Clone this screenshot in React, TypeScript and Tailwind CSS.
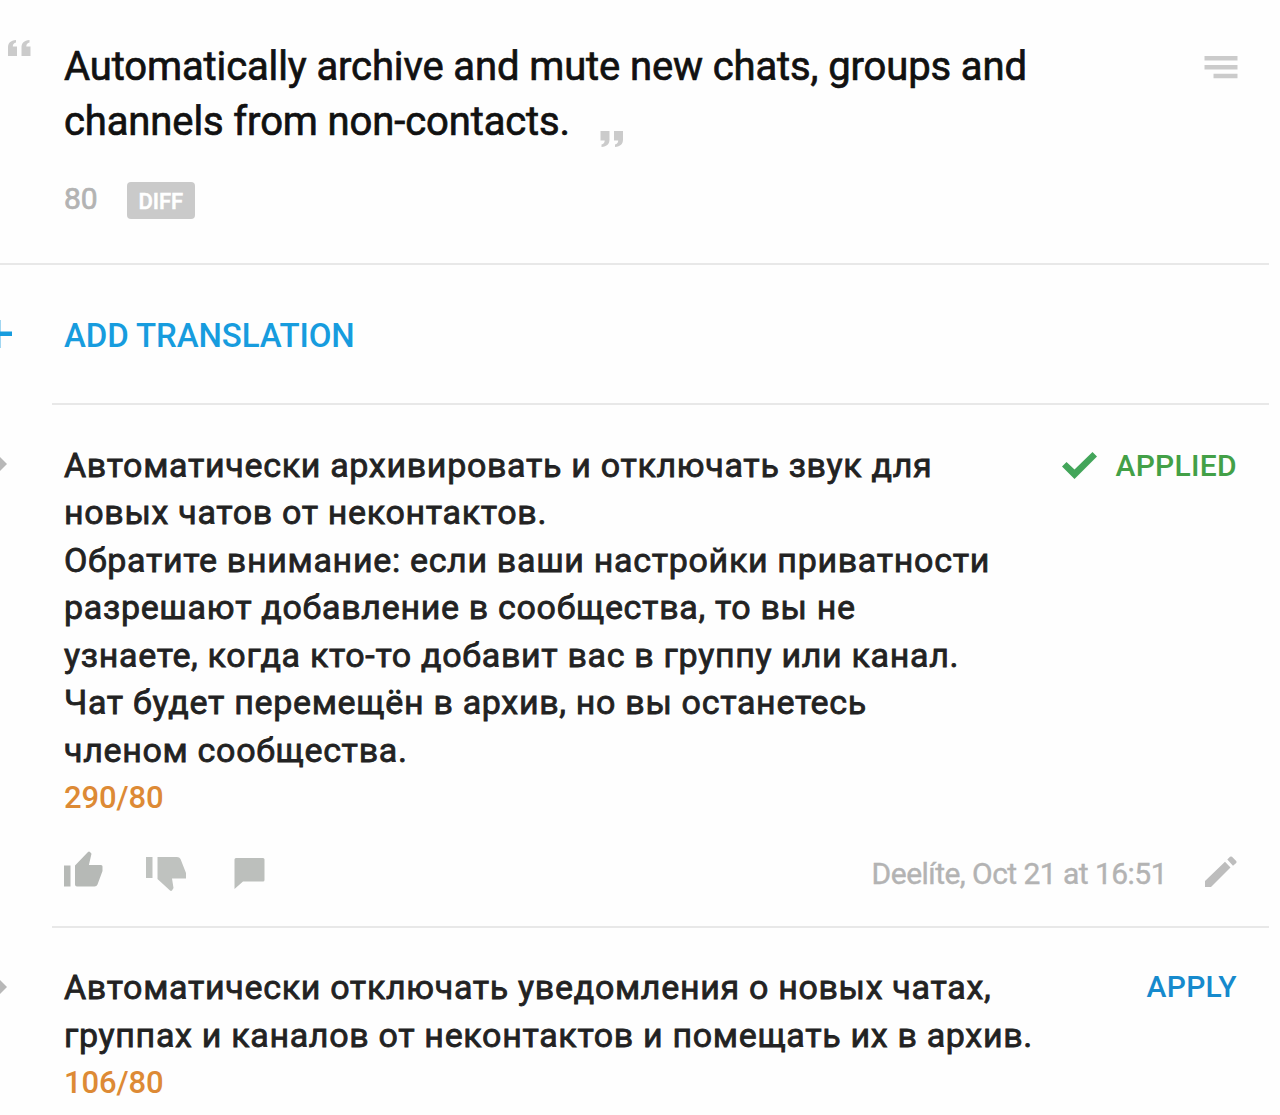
import React from 'react';

interface Translation {
  lines: string[];
  count: string;
  applied?: boolean;
  author?: string;
}

const translations: Translation[] = [
  {
    lines: [
      'Автоматически архивировать и отключать звук для',
      'новых чатов от неконтактов.',
      'Обратите внимание: если ваши настройки приватности',
      'разрешают добавление в сообщества, то вы не',
      'узнаете, когда кто-то добавит вас в группу или канал.',
      'Чат будет перемещён в архив, но вы останетесь',
      'членом сообщества.',
    ],
    count: '290/80',
    applied: true,
    author: 'Deelíte, Oct 21 at 16:51',
  },
  {
    lines: [
      'Автоматически отключать уведомления о новых чатах,',
      'группах и каналов от неконтактов и помещать их в архив.',
    ],
    count: '106/80',
  },
];

const QuoteIcon = ({ className }: { className: string }) => (
  <svg className={className} viewBox="0 0 23 16" fill="#cbcbcb">
    <path d="M0 16V7.500C0 3 2.500 .6 8 0V2.500C5.800 3 4.800 4.500 4.800 6.500H9V16Z" />
    <path d="M13.500 16V7.500C13.500 3 16 .6 21.500 0V2.500C19.300 3 18.300 4.500 18.300 6.500H22.500V16Z" />
  </svg>
);

const MenuIcon = () => (
  <svg className="w-[34px] h-6 mt-[55px]" viewBox="0 0 34 24" fill="#cbcbcb">
    <path d="M.5 1h33v4.500H.5zM.5 10h33v4.500H.5zM9.500 18.800h24v4.500h-24z" />
  </svg>
);

const Actions = ({ author }: { author: string }) => (
  <div className="flex items-center h-[104px] pr-8">
    <svg className="w-[39px] h-[36px] mt-[-9px]" viewBox="0 0 39 36" fill="#b6b9b6">
      <path d="M0 14.500h6.500v21H0z" />
      <path d="M11 14.500L24 1q1-1 2 0l1.500 1.800-2.600 11.200H37q1.500 0 1.500 1.500V20L33.500 33.500q-.8 2-3 2H13q-2 0-2-2z" />
    </svg>
    <svg className="w-[41px] h-[36px] ml-[43px] mt-[1px]" viewBox="0 0 41 36" fill="#bfc2bf">
      <path d="M0 1h6.500v21H0zM11.500 1H31q2.500 0 3.500 2L40 17v5.500H26l1.500 9.500-1.500 2.500q-1 .8-2 0L11.500 23z" />
    </svg>
    <svg className="w-[31px] h-[32px] ml-[47px] mt-[-2px]" viewBox="0 0 31 32" fill="#bcbfbc">
      <path d="M2 1h27q1.500 0 1.500 1.500V23q0 1.500-1.500 1.500H9L.5 32V2.500Q.5 1 2 1z" />
    </svg>
    <div className="flex-1" />
    <span className="text-[30px] leading-9 text-[#b3b3b3] tracking-[-0.54px] mt-[1px] [-webkit-text-stroke:0.4px]">{author}</span>
    <svg className="w-8 h-8 ml-[38px] mt-[-4px]" viewBox="0 0 32 32" fill="#bdbdbd">
      <path d="M0 25L20 5.800 25.500 11.500 6 31H0zM22.300 3.500L25 .8q1-.8 2 0l4.200 4.200q.8 1 0 2L28 9.800z" />
    </svg>
  </div>
);

const TranslationRow = ({ item }: { item: Translation }) => (
  <div className="flex">
    <div className="w-[52px] pt-[54px]">
      <svg className="w-[7px] h-[14px]" viewBox="0 0 7 14" fill="#b8b8b8">
        <path d="M0 0L7 7L0 14z" />
      </svg>
    </div>
    <div className="flex-1 border-t-2 border-[#e8e8e8] pl-3">
      <div className="flex justify-between pt-[36.5px] pr-8">
        <div className="text-[34px] leading-[47.5px] text-[#222] tracking-[0.68px] whitespace-nowrap [-webkit-text-stroke:0.8px]">
          {item.lines.map((line) => (
            <div key={line}>{line}</div>
          ))}
          <div className="text-[31px] font-medium text-[#dd8a35] tracking-[-0.1px] [-webkit-text-stroke:0px]">{item.count}</div>
        </div>
        {item.applied ? (
          <div className="flex items-center h-[47px] text-[30px] font-medium text-[#43a047] tracking-[0.3px]">
            <svg className="w-[35px] h-[27px] mr-[18px]" viewBox="0 0 35 27" fill="#43a55a">
              <path d="M0 14.500L4.500 10l8 7.500L30.500 0 35 4.500 12.500 27z" />
            </svg>
            APPLIED
          </div>
        ) : (
          <div className="flex items-center h-[45px] text-[30px] font-medium text-[#168acd] tracking-[0.3px]">APPLY</div>
        )}
      </div>
      {item.author && <Actions author={item.author} />}
    </div>
  </div>
);

const App = () => {
  return (
    <div className="w-[1280px] h-[1115px] overflow-hidden bg-[#fefefe] font-['Roboto',sans-serif]">
      <div className="w-[1269px]">
        <div className="flex h-[265px] border-b-2 border-[#e8e8e8]">
          <div className="w-16 pl-2 pt-[40px]">
            <QuoteIcon className="w-[23px] h-4" />
          </div>
          <div className="flex-1 pt-[39px]">
            <div className="text-[40px] leading-[55px] text-[#111] tracking-[-0.12px] whitespace-nowrap [-webkit-text-stroke:0.7px]">
              <div>Automatically archive and mute new chats, groups and</div>
              <div className="flex">
                channels from non-contacts.
                <QuoteIcon className="w-[23px] h-4 ml-[30px] mt-[37px] rotate-180" />
              </div>
            </div>
            <div className="flex items-center mt-[33px] h-[37px]">
              <span className="text-[30px] leading-9 text-[#b3b3b3] mt-[-3px] [-webkit-text-stroke:0.7px]">80</span>
              <span className="flex items-center justify-center w-[68px] h-[37px] ml-[29px] pt-[2px] rounded-[4px] bg-[#cacaca] text-white text-[22px] font-medium tracking-[-0.1px] [-webkit-text-stroke:0.5px]">
                DIFF
              </span>
            </div>
          </div>
          <div className="pr-[31px]">
            <MenuIcon />
          </div>
        </div>

        <div className="flex items-center h-[138px] text-[#179cde]">
          <svg className="w-16 h-7" viewBox="0 0 64 28" fill="currentColor">
            <path d="M0 11.500h12v4.500H0z" />
            <path d="M0 0h1v28H0z" opacity=".4" />
          </svg>
          <span className="text-[33px] font-medium tracking-[-0.1px] mt-[3px]">ADD TRANSLATION</span>
        </div>

        {translations.map((item) => (
          <TranslationRow key={item.count} item={item} />
        ))}
      </div>
    </div>
  );
};

export default App;
